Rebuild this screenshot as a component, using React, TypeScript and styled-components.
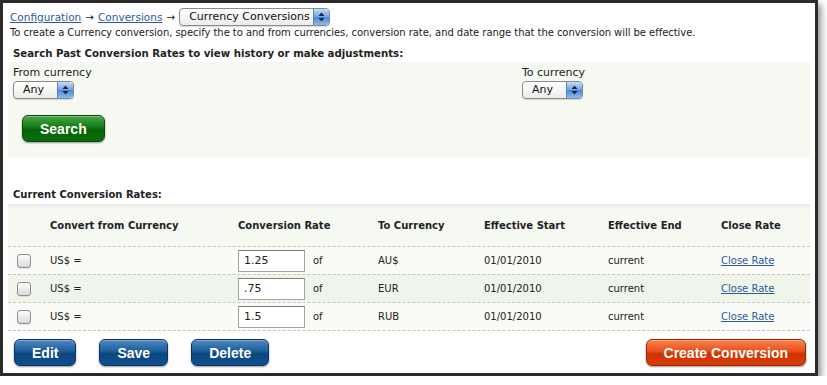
import React from 'react'
import styled, { createGlobalStyle, css } from 'styled-components'

const GlobalStyle = createGlobalStyle`
  html, body {
    margin: 0;
    padding: 0;
    background: #fff;
  }
  body {
    font-family: "DejaVu Sans", Verdana, sans-serif;
    font-size: 10px;
    color: #222;
  }
`

const Frame = styled.div`
  width: 802px;
  height: 370px;
  padding: 0 5px;
  border: 3px solid #2b2b2b;
  background: #fff;
  box-shadow: 3px 4px 7px rgba(0, 0, 0, 0.45);
  display: flex;
  flex-direction: column;
`

const Crumbs = styled.div`
  display: flex;
  align-items: center;
  gap: 4px;
  margin-top: 5px;
  padding-left: 2px;
  height: 17px;
  font-size: 10.5px;
`
const Link = styled.a`
  color: #2a5b9c;
  text-decoration: underline;
  cursor: pointer;
`
const Intro = styled.div`
  margin-top: 2px;
  padding-left: 2px;
  line-height: 12px;
  font-size: 10px;
  letter-spacing: -0.05px;
`
const Heading = styled.div`
  margin-top: 8px;
  padding-left: 5px;
  line-height: 14px;
  font-size: 10.2px;
  font-weight: bold;
`

const Panel = styled.div`
  background: #f6f8f2;
`
const SearchPanel = styled(Panel)`
  margin-top: 1px;
  padding: 5px 5px 16px;
  display: grid;
  grid-template-columns: 509px 1fr;
  row-gap: 16px;
`
const Field = styled.div`
  display: flex;
  flex-direction: column;
  align-items: flex-start;
  gap: 2px;
  font-size: 11px;
  line-height: 12px;
`

const Popup = styled.div<{ $w: number }>`
  display: inline-flex;
  align-items: stretch;
  width: ${p => p.$w}px;
  height: 16px;
  border: 1px solid #8a8a8a;
  border-radius: 4px;
  background: linear-gradient(#ffffff, #ececec);
  box-shadow: 0 1px 1px rgba(0, 0, 0, 0.15);
  overflow: hidden;
  font-size: 11px;
  color: #111;
`
const PopupLabel = styled.span`
  flex: 1;
  padding-left: 9px;
  line-height: 16px;
  white-space: nowrap;
`
const PopupArrows = styled.span`
  width: 15px;
  border-left: 1px solid #5d84b8;
  background: linear-gradient(#c4dcf7, #6fa2e2 50%, #4b86d6 51%, #8dbcf2);
  display: flex;
  align-items: center;
  justify-content: center;
`

const Select = ({ label, width }: { label: string; width: number }) => (
  <Popup $w={width}>
    <PopupLabel>{label}</PopupLabel>
    <PopupArrows>
      <svg width="7" height="10" viewBox="0 0 7 10">
        <path d="M3.5 0.5 L6.5 4 L0.5 4 Z M3.5 9.5 L6.5 6 L0.5 6 Z" fill="#1b2a3d" />
      </svg>
    </PopupArrows>
  </Popup>
)

const tones = {
  green: css`
    background: linear-gradient(#48a848, #137a13 45%, #066306 55%, #0a6e0a);
    border-color: #0b4a0b;
  `,
  blue: css`
    background: linear-gradient(#4f88c0, #1d5c9a 45%, #0b4680 55%, #104f8e);
    border-color: #0a3664;
  `,
  red: css`
    background: linear-gradient(#f8834c, #e9501c 45%, #cf3300 55%, #d93d05);
    border-color: #9c2500;
  `,
}

const Button = styled.button<{ $tone: 'green' | 'blue' | 'red' }>`
  height: 27px;
  padding: 0 17px;
  border: 1px solid;
  border-radius: 6px;
  color: #fff;
  font-family: "Liberation Sans", Arial, sans-serif;
  font-weight: bold;
  font-size: 14px;
  box-shadow: 0 1px 2px rgba(0, 0, 0, 0.4), inset 0 1px 0 rgba(255, 255, 255, 0.3);
  cursor: pointer;
  ${p => tones[p.$tone]}
`
const SearchButton = styled(Button)`
  justify-self: start;
  margin-left: 9px;
`

const SubHeading = styled.div`
  margin-top: 31px;
  padding-left: 5px;
  line-height: 12px;
  font-size: 10px;
  font-weight: bold;
`
const TablePanel = styled(Panel)`
  margin-top: 3px;
  box-shadow: inset 0 4px 4px -2px rgba(0, 0, 0, 0.07);
`
const cols = '42px 188px 140px 106px 124px 113px 1fr'
const HeadRow = styled.div`
  display: grid;
  grid-template-columns: ${cols};
  align-items: center;
  height: 42px;
  font-weight: bold;
  font-size: 10px;
`
const Row = styled.div<{ $alt: boolean }>`
  display: grid;
  grid-template-columns: ${cols};
  align-items: center;
  height: 27px;
  border-top: 1px dashed #c6c6c6;
  background: ${p => (p.$alt ? '#eff5e8' : '#fafbf7')};
  &:last-child {
    border-bottom: 1px dashed #c6c6c6;
  }
`
const Check = styled.span`
  margin-left: 9px;
  width: 12px;
  height: 12px;
  border: 1px solid #8e8e8e;
  border-radius: 3px;
  background: linear-gradient(#fdfdfd, #d9d9d9);
  box-shadow: 0 1px 0 rgba(0, 0, 0, 0.08);
`
const RateCell = styled.div`
  display: flex;
  align-items: center;
  gap: 8px;
`
const RateInput = styled.input`
  box-sizing: border-box;
  width: 67px;
  height: 22px;
  padding: 0 5px;
  border: 1px solid #a4a4a4;
  border-top-color: #7d7d7d;
  background: #fff;
  font-family: "DejaVu Sans", Verdana, sans-serif;
  font-size: 11px;
  color: #222;
`

const Actions = styled.div`
  display: flex;
  justify-content: space-between;
  margin-top: 8px;
  padding: 0 4px 0 6px;
`
const ButtonGroup = styled.div`
  display: flex;
  gap: 23px;
`

const rates = [
  { rate: '1.25', to: 'AU$' },
  { rate: '.75', to: 'EUR' },
  { rate: '1.5', to: 'RUB' },
]

const App = () => {
  return (
    <Frame>
      <GlobalStyle />
      <Crumbs>
        <Link>Configuration</Link>
        <span>→</span>
        <Link>Conversions</Link>
        <span>→</span>
        <Select label="Currency Conversions" width={149} />
      </Crumbs>
      <Intro>
        To create a Currency conversion, specify the to and from currencies, conversion rate, and date range that the conversion will be effective.
      </Intro>
      <Heading>Search Past Conversion Rates to view history or make adjustments:</Heading>
      <SearchPanel>
        <Field>
          From currency
          <Select label="Any" width={59} />
        </Field>
        <Field>
          To currency
          <Select label="Any" width={59} />
        </Field>
        <SearchButton $tone="green">Search</SearchButton>
      </SearchPanel>

      <SubHeading>Current Conversion Rates:</SubHeading>
      <TablePanel>
        <HeadRow>
          <span />
          <span>Convert from Currency</span>
          <span>Conversion Rate</span>
          <span>To Currency</span>
          <span>Effective Start</span>
          <span>Effective End</span>
          <span>Close Rate</span>
        </HeadRow>
        {rates.map((r, i) => (
          <Row key={r.to} $alt={i % 2 === 1}>
            <Check />
            <span>US$ =</span>
            <RateCell>
              <RateInput defaultValue={r.rate} />
              of
            </RateCell>
            <span>{r.to}</span>
            <span>01/01/2010</span>
            <span>current</span>
            <span>
              <Link>Close Rate</Link>
            </span>
          </Row>
        ))}
      </TablePanel>

      <Actions>
        <ButtonGroup>
          <Button $tone="blue">Edit</Button>
          <Button $tone="blue">Save</Button>
          <Button $tone="blue">Delete</Button>
        </ButtonGroup>
        <Button $tone="red">Create Conversion</Button>
      </Actions>
    </Frame>
  )
}

export default App
